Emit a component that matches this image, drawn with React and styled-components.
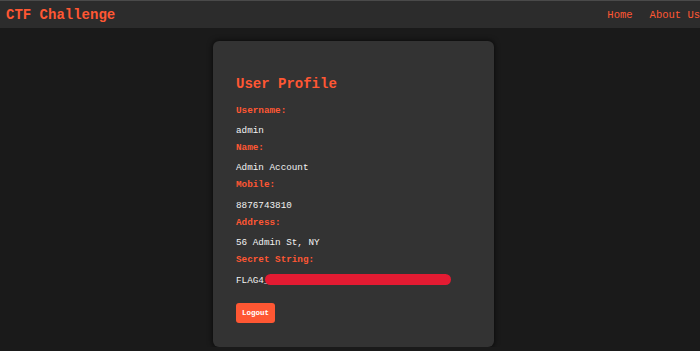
import React from 'react';
import styled, { createGlobalStyle } from 'styled-components';

const GlobalStyle = createGlobalStyle`
    html, body {
        margin: 0;
        padding: 0;
        background-color: #1a1a1a;
        font-family: "Liberation Mono", "DejaVu Sans Mono", monospace;
    }
`;

const NavBar = styled.div`
    height: 27px;
    border-top: 1px solid #4a4a4a;
    background-color: #2c2c2c;
    display: flex;
    align-items: center;
    justify-content: space-between;
    padding: 0 0 0 6px;
`;

const Brand = styled.div`
    color: #ff5733;
    font-size: 14px;
    font-weight: bold;
    line-height: 16px;
`;

const Links = styled.div`
    display: flex;
    gap: 17px;
`;

const NavLink = styled.a`
    color: #ff5733;
    font-size: 10.5px;
    line-height: 14px;
    text-decoration: none;
    white-space: nowrap;
    padding-top: 1px;
`;

const Main = styled.div`
    display: flex;
    justify-content: center;
    padding: 13px 0 0 7px;
`;

const Card = styled.div`
    width: 235px;
    padding: 23px 23px 24px;
    background-color: #333333;
    border-radius: 6px;
    box-shadow: 0 0 5px 1px rgba(0, 0, 0, 0.55);
`;

const Title = styled.h2`
    margin: 12px 0 12.5px;
    color: #ff5733;
    font-size: 14px;
    font-weight: bold;
    line-height: 16px;
`;

const Label = styled.div`
    color: #ff5733;
    font-size: 9.3px;
    font-weight: bold;
    line-height: 11px;
    margin-bottom: 9.3px;
`;

const Value = styled.div`
    color: #f2f2f2;
    font-size: 9.3px;
    line-height: 11px;
    margin-bottom: 6.2px;
    white-space: nowrap;
`;

const Redacted = styled.span`
    display: inline-block;
    vertical-align: top;
    width: 186px;
    height: 11px;
    margin-left: -4px;
    margin-top: -0.5px;
    border-radius: 6px;
    background-color: #e31b32;
`;

const Button = styled.button`
    margin-top: 11.1px;
    height: 20px;
    padding: 0 6px;
    border: none;
    border-radius: 3px;
    background-color: #ff5733;
    color: #ffffff;
    font-family: "Liberation Mono", "DejaVu Sans Mono", monospace;
    font-size: 7.5px;
    font-weight: bold;
    cursor: pointer;
`;

const fields = [
    { label: 'Username:', value: 'admin' },
    { label: 'Name:', value: 'Admin Account' },
    { label: 'Mobile:', value: '8876743810' },
    { label: 'Address:', value: '56 Admin St, NY' },
];

export default function App() {
    return <>
        <GlobalStyle />
        <NavBar>
            <Brand>CTF Challenge</Brand>
            <Links>
                <NavLink href="#">Home</NavLink>
                <NavLink href="#">About Us</NavLink>
            </Links>
        </NavBar>
        <Main>
            <Card>
                <Title>User Profile</Title>
                {fields.map(f => (
                    <React.Fragment key={f.label}>
                        <Label>{f.label}</Label>
                        <Value>{f.value}</Value>
                    </React.Fragment>
                ))}
                <Label>Secret String:</Label>
                <Value>FLAG4_<Redacted /></Value>
                <Button>Logout</Button>
            </Card>
        </Main>
    </>
}
